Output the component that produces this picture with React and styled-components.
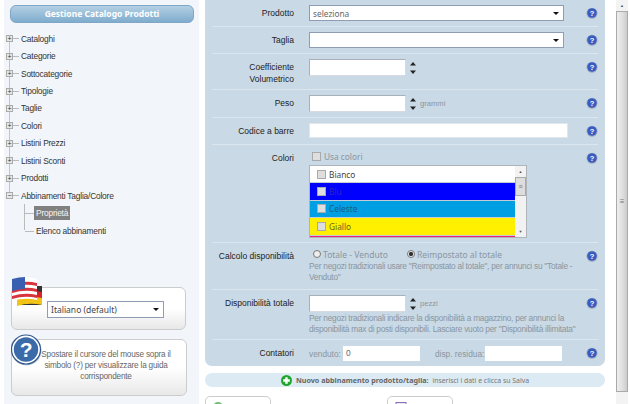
import styled, { createGlobalStyle } from "styled-components"

const treeItems = ["Cataloghi", "Categorie", "Sottocategorie", "Tipologie", "Taglie", "Colori", "Listini Prezzi", "Listini Sconti", "Prodotti"]

const colorItems = [
    { name: "Bianco", bg: "#ffffff", fg: "#444" },
    { name: "Blu", bg: "#0000ff", fg: "#2a2ab0" },
    { name: "Celeste", bg: "#009fe3", fg: "#1a5f80" },
    { name: "Giallo", bg: "#fff000", fg: "#6a6420" },
]

function Help() {
    return (
        <HelpIcon viewBox="0 0 12 12">
            <circle cx="6" cy="6.3" r="5.6" fill="#a8b4c2" />
            <circle cx="6" cy="6" r="4.8" fill="#3a5cc0" />
            <text x="6" y="8.6" fontSize="7.5" fontWeight="bold" fontFamily="Liberation Sans" textAnchor="middle" fill="#fff">?</text>
        </HelpIcon>
    )
}

function Spinner() {
    return (
        <SpinBox viewBox="0 0 6 14">
            <path d="M3 1 L6 4.5 H0 Z" fill="#222" />
            <path d="M0 9.5 H6 L3 13 Z" fill="#222" />
        </SpinBox>
    )
}

function Flags() {
    return (
        <FlagIcon viewBox="0 0 32 31">
            <rect x="6" y="10" width="25" height="19" fill="#333" />
            <path d="M6 16 Q18 13 31 16 V23 Q18 20 6 24 Z" fill="#d8232a" />
            <path d="M6 22 Q18 19 31 22 V29 Q18 26 6 30 Z" fill="#f3c316" />
            <path d="M1 3 Q14 -1 26 3 V24 Q14 21 1 25 Z" fill="#fff" />
            <path d="M1 8 Q14 4 26 7 V10 Q14 7 1 11 Z M1 14 Q14 10 26 13 V16 Q14 13 1 17 Z M1 20 Q14 16 26 19 V22 Q14 19 1 23 Z" fill="#d8343c" />
            <path d="M1 3 Q8 1 14 1 V13 Q8 13 1 15 Z" fill="#3a5fb0" />
        </FlagIcon>
    )
}

function BigQuestion() {
    return (
        <QuestionIcon viewBox="0 0 31 32">
            <circle cx="15.5" cy="16.5" r="15" fill="#b8c2cc" />
            <circle cx="15" cy="15.5" r="14.5" fill="#fff" stroke="#2e5590" strokeWidth="1.2" />
            <circle cx="15" cy="15.5" r="12.2" fill="#3a6aa8" />
            <text x="15" y="23" fontSize="21" fontWeight="bold" fontFamily="Liberation Sans" textAnchor="middle" fill="#fff">?</text>
        </QuestionIcon>
    )
}

export default function App() {
    return (
        <>
            <GlobalStyle />
            <Page>
                <Sidebar>
                    <SideTitle>Gestione Catalogo Prodotti</SideTitle>
                    <Tree>
                        {treeItems.map((item) => (
                            <TreeRow key={item}>
                                <TreeToggle>+</TreeToggle>
                                <TreeDash />
                                {item}
                            </TreeRow>
                        ))}
                        <TreeRow>
                            <TreeToggle>−</TreeToggle>
                            <TreeDash />
                            Abbinamenti Taglia/Colore
                        </TreeRow>
                        <SubTree>
                            <SubRow>
                                <SubDash />
                                <Selected>Proprietà</Selected>
                            </SubRow>
                            <SubRow>
                                <SubDash />
                                <SubLabel>Elenco abbinamenti</SubLabel>
                            </SubRow>
                        </SubTree>
                    </Tree>
                    <LangBox>
                        <Flags />
                        <SideSelect>
                            Italiano (default)
                            <Caret />
                        </SideSelect>
                    </LangBox>
                    <HelpBox>
                        <BigQuestion />
                        Spostare il cursore del mouse sopra il simbolo (?) per visualizzare la guida corrispondente
                    </HelpBox>
                </Sidebar>
                <Main>
                    <Panel>
                        <Row $h={27}>
                            <Label>Prodotto</Label>
                            <Value>
                                <SelectBox>
                                    seleziona
                                    <Caret />
                                </SelectBox>
                            </Value>
                            <Help />
                        </Row>
                        <Row $h={27}>
                            <Label>Taglia</Label>
                            <Value>
                                <SelectBox>
                                    <Caret />
                                </SelectBox>
                            </Value>
                            <Help />
                        </Row>
                        <Row $h={36}>
                            <Label>Coefficiente Volumetrico</Label>
                            <Value>
                                <Inline>
                                    <NumberInput />
                                    <Spinner />
                                </Inline>
                            </Value>
                            <Help />
                        </Row>
                        <Row $h={28}>
                            <Label>Peso</Label>
                            <Value>
                                <Inline>
                                    <NumberInput />
                                    <Spinner />
                                    <Unit>grammi</Unit>
                                </Inline>
                            </Value>
                            <Help />
                        </Row>
                        <Row $h={27}>
                            <Label>Codice a barre</Label>
                            <Value>
                                <WideInput />
                            </Value>
                            <Help />
                        </Row>
                        <Row $h={98}>
                            <Label>Colori</Label>
                            <Value>
                                <CheckLine>
                                    <Check />
                                    <Hint>Usa colori</Hint>
                                </CheckLine>
                                <ColorList>
                                    <ColorItems>
                                        {colorItems.map((c) => (
                                            <ColorRow key={c.name} $bg={c.bg} $fg={c.fg}>
                                                <Check />
                                                {c.name}
                                            </ColorRow>
                                        ))}
                                        <ColorStrip />
                                    </ColorItems>
                                    <ListScroll>
                                        <ScrollArrow>▲</ScrollArrow>
                                        <ListThumb>≡</ListThumb>
                                        <ListSpacer />
                                        <ScrollArrow>▼</ScrollArrow>
                                    </ListScroll>
                                </ColorList>
                            </Value>
                            <Help />
                        </Row>
                        <Row $h={47}>
                            <Label>Calcolo disponibilità</Label>
                            <Value>
                                <RadioLine>
                                    <RadioOption>
                                        <Radio />
                                        Totale - Venduto
                                    </RadioOption>
                                    <RadioOption>
                                        <Radio $on />
                                        Reimpostato al totale
                                    </RadioOption>
                                </RadioLine>
                                <Note>Per negozi tradizionali usare "Reimpostato al totale", per annunci su "Totale - Venduto"</Note>
                            </Value>
                            <Help />
                        </Row>
                        <Row $h={50}>
                            <Label>Disponibilità totale</Label>
                            <Value>
                                <Inline>
                                    <NumberInput />
                                    <Spinner />
                                    <Unit>pezzi</Unit>
                                </Inline>
                                <Note>Per negozi tradizionali indicare la disponibilità a magazzino, per annunci la disponibilità max di posti disponibili. Lasciare vuoto per "Disponibilità illimitata"</Note>
                            </Value>
                            <Help />
                        </Row>
                        <Row $h={26} $last>
                            <Label>Contatori</Label>
                            <Value>
                                <CounterLine>
                                    <CounterLabel>venduto:</CounterLabel>
                                    <CounterInput>0</CounterInput>
                                    <span />
                                    <CounterLabel>disp. residua:</CounterLabel>
                                    <CounterInput />
                                </CounterLine>
                            </Value>
                            <Help />
                        </Row>
                    </Panel>
                    <NoticeBar>
                        <svg width="11" height="11" viewBox="0 0 11 11">
                            <circle cx="5.5" cy="5.5" r="5.5" fill="#22a52e" />
                            <path d="M4.3 2.2 H6.7 V4.3 H8.8 V6.7 H6.7 V8.8 H4.3 V6.7 H2.2 V4.3 H4.3 Z" fill="#fff" />
                        </svg>
                        <strong>Nuovo abbinamento prodotto/taglia:</strong> inserisci i dati e clicca su Salva
                    </NoticeBar>
                    <Actions>
                        <ActionButton $w={66}>
                            <svg width="10" height="10" viewBox="0 0 10 10">
                                <circle cx="5" cy="5" r="5" fill="#6fbf73" />
                            </svg>
                        </ActionButton>
                        <ActionButton $w={66}>
                            <svg width="12" height="12" viewBox="0 0 12 12">
                                <rect x="1" y="0.5" width="10" height="11" fill="#efe9f7" stroke="#8a6cc0" />
                            </svg>
                        </ActionButton>
                    </Actions>
                </Main>
                <PageScroll>
                    <ScrollArrow>▲</ScrollArrow>
                    <PageThumb>≡</PageThumb>
                </PageScroll>
            </Page>
        </>
    )
}

const GlobalStyle = createGlobalStyle`
    html, body {
        margin: 0;
        padding: 0;
        height: 404px;
        overflow: hidden;
        background: #fff;
    }
    * {
        box-sizing: border-box;
    }
`

const Page = styled.div`
    width: 630px;
    height: 404px;
    overflow: hidden;
    display: flex;
    align-items: flex-start;
    font-family: "Liberation Sans", sans-serif;
    font-size: 8.3px;
    color: #333;
`

const Sidebar = styled.div`
    width: 195px;
    height: 404px;
    margin-left: 4px;
    padding-top: 5px;
    background: #f2f6fa;
    display: flex;
    flex-direction: column;
`

const SideTitle = styled.div`
    width: 184px;
    height: 18px;
    margin-left: 6px;
    border: 1px solid #7fa6c4;
    border-radius: 6px;
    background: linear-gradient(#b4d0e4, #7faccd);
    color: #fff;
    font-family: "Noto Sans", sans-serif;
    font-weight: bold;
    font-size: 8.5px;
    line-height: 15px;
    text-align: center;
`

const Tree = styled.div`
    position: relative;
    margin-top: 7px;
    margin-left: 2px;
    height: 257px;
    font-size: 8.4px;
    letter-spacing: -0.2px;
    &::before {
        content: "";
        position: absolute;
        left: 3px;
        top: 8px;
        width: 1px;
        height: 157px;
        background: #c4c4c4;
    }
`

const TreeRow = styled.div`
    position: relative;
    height: 17.45px;
    display: flex;
    align-items: center;
`

const TreeToggle = styled.span`
    position: relative;
    width: 7px;
    height: 7px;
    border: 1px solid #aaa;
    background: #e8e8e8;
    color: #333;
    font-size: 7px;
    line-height: 5px;
    text-align: center;
    flex: none;
`

const TreeDash = styled.span`
    width: 6px;
    height: 1px;
    background: #bbb;
    margin-right: 2px;
    flex: none;
`

const SubTree = styled.div`
    margin-left: 18px;
    border-left: 1px solid #bbb;
    height: 26px;
`

const SubRow = styled.div`
    height: 18px;
    display: flex;
    align-items: center;
`

const SubDash = styled.span`
    width: 9px;
    height: 1px;
    background: #bbb;
    flex: none;
`

const Selected = styled.span`
    background: #808080;
    color: #f4f4f4;
    padding: 0 2px;
    height: 14px;
    line-height: 14px;
`

const SubLabel = styled.span`
    padding: 0 2px;
`

const LangBox = styled.div`
    position: relative;
    width: 175px;
    height: 43px;
    margin-left: 7px;
    border: 1px solid #ccc;
    border-radius: 6px;
    background: linear-gradient(#fff 50%, #e8e8e8);
    padding: 13px 0 0 35px;
`

const FlagIcon = styled.svg`
    position: absolute;
    left: -1px;
    top: -12px;
    width: 32px;
    height: 31px;
`

const SideSelect = styled.div`
    position: relative;
    width: 117px;
    height: 17px;
    border: 1px solid #8e9db5;
    background: #fff;
    color: #444;
    font-family: "Noto Sans", sans-serif;
    font-size: 8.5px;
    line-height: 15px;
    padding-left: 3px;
`

const Caret = styled.span`
    position: absolute;
    right: 4px;
    top: 6px;
    width: 0;
    height: 0;
    border-left: 3px solid transparent;
    border-right: 3px solid transparent;
    border-top: 3px solid #111;
`

const HelpBox = styled.div`
    position: relative;
    width: 176px;
    height: 57px;
    margin-left: 7px;
    margin-top: 9px;
    border: 1px solid #ccc;
    border-radius: 6px;
    background: linear-gradient(#fff 50%, #e8e8e8);
    padding: 9px 15px 0 29px;
    text-align: center;
    color: #666;
    font-size: 8.2px;
    letter-spacing: -0.2px;
    line-height: 11px;
`

const QuestionIcon = styled.svg`
    position: absolute;
    left: -1px;
    top: -6px;
    width: 31px;
    height: 32px;
`

const Main = styled.div`
    width: 400px;
    margin-left: 6px;
    display: flex;
    flex-direction: column;
`

const Panel = styled.div`
    height: 366px;
    background: #c9d9e5;
    border-radius: 0 0 7px 7px;
    padding: 0 7px;
`

const Row = styled.div`
    height: ${(p) => p.$h}px;
    display: flex;
    align-items: flex-start;
    padding-top: 5px;
    border-bottom: ${(p) => (p.$last ? "none" : "1px solid #dbe6ee")};
`

const Label = styled.div`
    width: 82px;
    flex: none;
    text-align: right;
    color: #222;
    font-size: 8.5px;
    line-height: 12px;
    padding-top: 2px;
`

const Value = styled.div`
    width: 272px;
    margin-left: 15px;
    flex: none;
`

const HelpIcon = styled.svg`
    width: 12px;
    height: 12px;
    margin-left: 5px;
    margin-top: 2px;
    flex: none;
`

const SelectBox = styled.div`
    position: relative;
    width: 255px;
    height: 16px;
    border: 1px solid #8e9db5;
    background: #fff;
    color: #666;
    font-family: "Noto Sans", sans-serif;
    line-height: 15px;
    padding-left: 3px;
`

const Inline = styled.div`
    display: flex;
    align-items: center;
    height: 17px;
`

const NumberInput = styled.div`
    width: 97px;
    height: 17px;
    background: #fff;
    border: 1px solid #a8b0ba;
    border-bottom-color: #d4dae0;
    border-right-color: #d4dae0;
`

const SpinBox = styled.svg`
    width: 6px;
    height: 14px;
    margin-left: 4px;
    flex: none;
`

const Hint = styled.span`
    color: #8a96a2;
    font-family: "Noto Sans", sans-serif;
    margin-left: 3px;
`

const Unit = styled.span`
    color: #8a96a2;
    font-size: 7.6px;
    margin-left: 4px;
`

const WideInput = styled.div`
    width: 259px;
    height: 15px;
    background: #fff;
    border: 1px solid #dfe6ec;
`

const CheckLine = styled.div`
    display: flex;
    align-items: center;
    height: 12px;
    padding-left: 3px;
`

const Check = styled.span`
    width: 9px;
    height: 9px;
    background: #dedede;
    border: 1px solid #aaa;
    flex: none;
`

const ColorList = styled.div`
    width: 218px;
    height: 73px;
    margin-top: 3px;
    border: 1px solid #aeb4ba;
    display: flex;
    background: #fff;
    overflow: hidden;
`

const ColorItems = styled.div`
    width: 205px;
    flex: none;
`

const ColorRow = styled.div`
    height: 17.4px;
    background: ${(p) => p.$bg};
    color: ${(p) => p.$fg};
    font-family: "Noto Sans", sans-serif;
    display: flex;
    align-items: center;
    gap: 3px;
    padding-left: 7px;
    border-bottom: 1px solid #c5ccd2;
`

const ColorStrip = styled.div`
    height: 2px;
    background: #ed1e79;
`

const ListScroll = styled.div`
    flex: 1;
    background: #f2f2f2;
    display: flex;
    flex-direction: column;
    align-items: center;
`

const ScrollArrow = styled.div`
    height: 11px;
    font-size: 4px;
    line-height: 11px;
    color: #555;
    text-align: center;
`

const ListThumb = styled.div`
    width: 100%;
    height: 19px;
    background: #ddd;
    border: 1px solid #aaa;
    color: #777;
    font-size: 7px;
    line-height: 17px;
    text-align: center;
`

const ListSpacer = styled.div`
    flex: 1;
`

const RadioLine = styled.div`
    display: flex;
    gap: 19px;
    height: 12px;
    padding-left: 4px;
    color: #8a96a2;
    font-family: "Noto Sans", sans-serif;
    font-size: 8.5px;
`

const RadioOption = styled.span`
    display: flex;
    align-items: center;
    gap: 2px;
`

const Radio = styled.span`
    width: 8px;
    height: 8px;
    border-radius: 50%;
    border: 1px solid #777;
    background: ${(p) => (p.$on ? "radial-gradient(#333 45%, #eee 55%)" : "#eee")};
    flex: none;
`

const Note = styled.div`
    color: #8a96a2;
    font-size: 8.3px;
    letter-spacing: -0.24px;
    line-height: 11px;
    margin-top: 1px;
`

const CounterLine = styled.div`
    display: grid;
    grid-template-columns: 34px 77px 15px 50px 77px;
    align-items: center;
    height: 15px;
    margin-top: 1px;
`

const CounterLabel = styled.span`
    color: #8a96a2;
    white-space: nowrap;
`

const CounterInput = styled.div`
    height: 15px;
    background: #fff;
    padding-left: 3px;
    line-height: 15px;
    color: #666;
`

const NoticeBar = styled.div`
    height: 14px;
    margin-top: 7px;
    background: #dceaf3;
    border-radius: 7px;
    display: flex;
    align-items: center;
    justify-content: center;
    gap: 2px;
    color: #777;
    font-family: "Noto Sans", sans-serif;
    font-size: 6.9px;
    white-space: pre;
    strong {
        color: #666;
        font-size: 7.2px;
        margin-left: 2px;
    }
`

const Actions = styled.div`
    display: flex;
    gap: 116px;
    margin-top: 9px;
`

const ActionButton = styled.div`
    width: ${(p) => p.$w}px;
    height: 24px;
    border: 1px solid #ccc;
    border-radius: 5px;
    background: #fff;
    padding: 5px 0 0 7px;
`

const PageScroll = styled.div`
    width: 12px;
    height: 404px;
    margin-left: 11px;
    background: #f3f3f3;
`

const PageThumb = styled.div`
    height: 381px;
    background: linear-gradient(90deg, #eee, #ddd 60%, #ccc);
    border: 1px solid #aaa;
    color: #777;
    font-size: 8px;
    line-height: 379px;
    text-align: center;
`
